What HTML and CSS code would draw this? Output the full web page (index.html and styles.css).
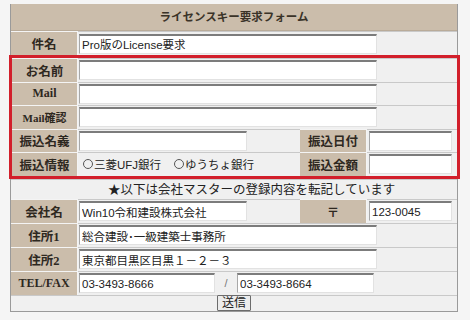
FILE: index.html
```html
<!DOCTYPE html>
<html lang="ja">
<head>
    <meta charset="UTF-8">
    <title>ライセンスキー要求フォーム</title>
    <link rel="stylesheet" href="styles.css">
</head>
<body>
    <form class="form" onsubmit="return false;">
        <div class="title">ライセンスキー要求フォーム</div>

        <div class="row">
            <div class="label">件名</div>
            <div class="field"><input type="text" class="wide" value="Pro版のLicense要求"></div>
        </div>

        <div class="group">
            <div class="row">
                <div class="label">お名前</div>
                <div class="field"><input type="text" class="wide"></div>
            </div>
            <div class="row">
                <div class="label latin">Mail</div>
                <div class="field"><input type="text" class="wide"></div>
            </div>
            <div class="row">
                <div class="label small">Mail確認</div>
                <div class="field"><input type="text" class="wide"></div>
            </div>
            <div class="row split">
                <div class="label">振込名義</div>
                <div class="field"><input type="text" class="medium"></div>
                <div class="label">振込日付</div>
                <div class="field right"><input type="text" class="short"></div>
            </div>
            <div class="row split">
                <div class="label">振込情報</div>
                <div class="field radios">
                    <label><input type="radio" name="bank">三菱UFJ銀行</label>
                    <label><input type="radio" name="bank">ゆうちょ銀行</label>
                </div>
                <div class="label">振込金額</div>
                <div class="field right"><input type="text" class="short"></div>
            </div>
        </div>

        <div class="note">★以下は会社マスターの登録内容を転記しています</div>

        <div class="row split">
            <div class="label">会社名</div>
            <div class="field"><input type="text" class="medium" value="Win10令和建設株式会社"></div>
            <div class="label">〒</div>
            <div class="field right"><input type="text" class="short" value="123-0045"></div>
        </div>
        <div class="row">
            <div class="label">住所1</div>
            <div class="field"><input type="text" class="wide" value="総合建設･一級建築士事務所"></div>
        </div>
        <div class="row">
            <div class="label">住所2</div>
            <div class="field"><input type="text" class="wide" value="東京都目黒区目黒１－２－３"></div>
        </div>
        <div class="row">
            <div class="label latin">TEL/FAX</div>
            <div class="field">
                <input type="text" class="tel" value="03-3493-8666">
                <span class="slash">/</span>
                <input type="text" class="tel fax" value="03-3493-8664">
            </div>
        </div>

        <div class="submit"><button type="submit">送信</button></div>
    </form>
</body>
</html>
```

FILE: styles.css
```css
body {
    margin: 0;
    background-color: #f5f5f5;
    font-family: "Liberation Sans", "Noto Sans CJK JP", sans-serif;
    color: #222;
}
.form {
    width: 446px;
    margin: 4px 0 0 10px;
    background-color: #f0f0f0;
    border: 1px solid #9a9a9a;
    border-top: none;
}
.title {
    height: 27px;
    line-height: 27px;
    background-color: #cbbdab;
    border-bottom: 1px solid #b9ab99;
    text-align: center;
    font-family: "Liberation Serif", "Noto Sans CJK JP", serif;
    font-size: 11.5px;
    font-weight: bold;
    color: #3a3328;
    box-sizing: border-box;
}
.row {
    display: grid;
    grid-template-columns: 67px 1fr;
    height: 24px;
}
.row.split {
    grid-template-columns: 67px 222px 67px 1fr;
}
.label {
    background-color: #cbbdab;
    border-top: 1px solid #f4f4f4;
    border-right: 1px solid #f4f4f4;
    display: flex;
    align-items: center;
    justify-content: center;
    font-family: "Liberation Serif", "Noto Sans CJK JP", serif;
    font-size: 12.5px;
    font-weight: bold;
    color: #2e281f;
}
.label.latin {
    font-size: 12px;
}
.label.small {
    font-size: 11px;
}
.field {
    border-top: 1px solid #c9c9c9;
    display: flex;
    align-items: center;
    padding-left: 1px;
}
.field.right {
    padding-left: 2px;
}
.group {
    border: 3px solid #d21f2b;
    margin: 0 -3px 0 -2px;
}
.group .row {
    height: 23.5px;
    grid-template-columns: 66px 1fr;
}
.group .row.split {
    grid-template-columns: 66px 222px 67px 1fr;
}
input[type="text"] {
    height: 20px;
    box-sizing: border-box;
    border: 1px solid #e2e2e2;
    border-top: 2px solid #7c7c7c;
    border-left: 1px solid #a8a8a8;
    background: #fff;
    padding: 0 2px;
    margin: 0;
    font-family: "Liberation Sans", "Noto Sans CJK JP", sans-serif;
    font-size: 11.5px;
    color: #222;
}
.wide { width: 298px; }
.medium { width: 168px; }
.short { width: 83px; }
.tel { width: 136px; }
.fax { width: 137px; }
.slash {
    width: 22px;
    text-align: center;
    font-size: 11px;
    color: #777;
}
.radios {
    font-size: 11.5px;
    gap: 13px;
    padding-left: 5px;
}
.radios label {
    display: flex;
    align-items: center;
}
.radios input[type="radio"] {
    appearance: none;
    width: 10px;
    height: 10px;
    margin: 0 1px 0 0;
    border: 1px solid #555;
    border-radius: 50%;
    background: transparent;
}
.note {
    height: 20px;
    line-height: 20px;
    border-top: 1px solid #c9c9c9;
    padding-left: 97px;
    font-size: 12.5px;
    box-sizing: border-box;
}
.submit {
    height: 15px;
    border-top: 1px solid #c9c9c9;
    display: flex;
    justify-content: center;
}
.submit button {
    height: 16px;
    margin-top: -1px;
    padding: 0 4px;
    border: 1px solid #6c6c6c;
    border-radius: 1px;
    background-color: #ececec;
    font-family: "Liberation Sans", "Noto Sans CJK JP", sans-serif;
    font-size: 12px;
    line-height: 12px;
    color: #222;
}
```
